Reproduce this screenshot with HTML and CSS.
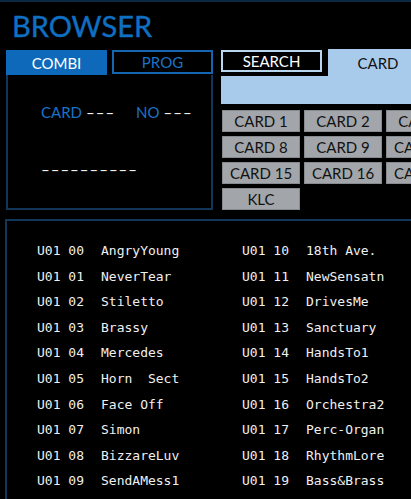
FILE: index.html
```html
<!DOCTYPE html>
<html lang="en">
<head>
    <meta charset="UTF-8">
    <meta name="viewport" content="width=device-width, initial-scale=1.0">
    <title>Browser</title>
    <link rel="stylesheet" href="styles.css">
</head>
<body>

    <h1 class="title">BROWSER</h1>

    <div class="top">
        <div class="left">
            <div class="tabs">
                <div class="tab tab-on">COMBI</div>
                <div class="tab tab-off">PROG</div>
            </div>
            <div class="info">
                <div class="info-row">
                    <span class="info-label">CARD</span>
                    <span class="dash dash-card">–––</span>
                    <span class="info-label label-no">NO</span>
                    <span class="dash dash-no">–––</span>
                </div>
                <div class="dash dash-name">––––––––––</div>
            </div>
        </div>

        <div class="right">
            <div class="right-head">
                <div class="search">SEARCH</div>
                <div class="card-tab">CARD</div>
            </div>
            <div class="card-strip"></div>
            <div class="cards">
                <div class="card-btn">CARD 1</div>
                <div class="card-btn">CARD 2</div>
                <div class="card-btn">CARD 3</div>
                <div class="card-btn">CARD 4</div>
                <div class="card-btn">CARD 5</div>
                <div class="card-btn">CARD 6</div>
                <div class="card-btn">CARD 7</div>
                <div class="card-btn">CARD 8</div>
                <div class="card-btn">CARD 9</div>
                <div class="card-btn">CARD 10</div>
                <div class="card-btn">CARD 11</div>
                <div class="card-btn">CARD 12</div>
                <div class="card-btn">CARD 13</div>
                <div class="card-btn">CARD 14</div>
                <div class="card-btn">CARD 15</div>
                <div class="card-btn">CARD 16</div>
                <div class="card-btn">CARD 17</div>
                <div class="card-btn">CARD 18</div>
                <div class="card-btn">CARD 19</div>
                <div class="card-btn">CARD 20</div>
                <div class="card-btn">CARD 21</div>
                <div class="card-btn">KLC</div>
            </div>
        </div>
    </div>

    <div class="list-panel">
        <div class="list">
            <div class="entry"><span class="num">U01 00</span><span class="name">AngryYoung</span></div>
            <div class="entry"><span class="num">U01 01</span><span class="name">NeverTear</span></div>
            <div class="entry"><span class="num">U01 02</span><span class="name">Stiletto</span></div>
            <div class="entry"><span class="num">U01 03</span><span class="name">Brassy</span></div>
            <div class="entry"><span class="num">U01 04</span><span class="name">Mercedes</span></div>
            <div class="entry"><span class="num">U01 05</span><span class="name">Horn  Sect</span></div>
            <div class="entry"><span class="num">U01 06</span><span class="name">Face Off</span></div>
            <div class="entry"><span class="num">U01 07</span><span class="name">Simon</span></div>
            <div class="entry"><span class="num">U01 08</span><span class="name">BizzareLuv</span></div>
            <div class="entry"><span class="num">U01 09</span><span class="name">SendAMess1</span></div>
            <div class="entry"><span class="num">U01 10</span><span class="name">18th Ave.</span></div>
            <div class="entry"><span class="num">U01 11</span><span class="name">NewSensatn</span></div>
            <div class="entry"><span class="num">U01 12</span><span class="name">DrivesMe</span></div>
            <div class="entry"><span class="num">U01 13</span><span class="name">Sanctuary</span></div>
            <div class="entry"><span class="num">U01 14</span><span class="name">HandsTo1</span></div>
            <div class="entry"><span class="num">U01 15</span><span class="name">HandsTo2</span></div>
            <div class="entry"><span class="num">U01 16</span><span class="name">Orchestra2</span></div>
            <div class="entry"><span class="num">U01 17</span><span class="name">Perc-Organ</span></div>
            <div class="entry"><span class="num">U01 18</span><span class="name">RhythmLore</span></div>
            <div class="entry"><span class="num">U01 19</span><span class="name">Bass&amp;Brass</span></div>
        </div>
    </div>

</body>
</html>
```

FILE: styles.css
```css
html, body {
    margin: 0;
    background: #000;
}

body {
    width: 411px;
    height: 499px;
    overflow: hidden;
    border-top: 2px solid #0c2744;
    box-sizing: border-box;
    font-family: Lato, "Open Sans", sans-serif;
}

.title {
    margin: 9px 0 8px 12px;
    font-size: 29px;
    line-height: 30px;
    font-weight: 400;
    color: #0f6fc2;
    -webkit-text-stroke: 0.4px #0f6fc2;
}

.top {
    display: flex;
    align-items: flex-start;
}

/* left block: COMBI / PROG tabs and card info */
.left {
    margin-left: 6px;
    width: 208px;
}

.tabs {
    display: flex;
    gap: 5px;
    padding-top: 1px;
}

.tab {
    width: 101px;
    box-sizing: border-box;
    display: flex;
    align-items: center;
    justify-content: center;
    font-size: 15px;
}

.tab-on {
    height: 25px;
    background: #0f69bb;
    color: #fff;
}

.tab-off {
    height: 24px;
    border: 2px solid #1565b0;
    color: #1a73c8;
}

.info {
    height: 135px;
    box-sizing: border-box;
    border: 2px solid #113659;
    border-top: none;
    padding: 28px 0 0 33px;
}

.info-row {
    display: flex;
    font-size: 15px;
    line-height: 18px;
}

.info-label {
    color: #1a73c8;
}

.dash {
    color: #f2f2f2;
    letter-spacing: 1px;
}

.dash-card {
    margin-left: 4px;
}

.label-no {
    margin-left: 21px;
}

.dash-no {
    margin-left: 4px;
}

.dash-name {
    margin-top: 39px;
    font-size: 15px;
    line-height: 18px;
}

/* right block: search button, card tab and card buttons */
.right {
    margin-left: 8px;
    width: 320px;
    flex-shrink: 0;
}

.right-head {
    display: flex;
    align-items: flex-start;
}

.search {
    margin-top: 1px;
    width: 101px;
    height: 22px;
    box-sizing: border-box;
    border: 2px solid #b8d6f0;
    color: #fff;
    font-size: 15px;
    display: flex;
    align-items: center;
    justify-content: center;
}

.card-tab {
    margin-left: 6px;
    width: 100px;
    height: 27px;
    background: #a9cbeb;
    color: #111;
    font-size: 15px;
    display: flex;
    align-items: center;
    justify-content: center;
}

.card-strip {
    height: 28px;
    background: #a9cbeb;
}

.cards {
    margin: 6px 0 0 1px;
    display: grid;
    grid-template-columns: repeat(7, 78px);
    grid-auto-rows: 22px;
    gap: 4px;
}

.card-btn {
    background: #a2a6aa;
    border: 1px solid #878b90;
    box-sizing: border-box;
    color: #111;
    font-size: 15px;
    display: flex;
    align-items: center;
    justify-content: center;
}

/* program list */
.list-panel {
    margin: 9px 0 0 5px;
    width: 430px;
    height: 300px;
    border: 2px solid #113659;
    padding: 17px 0 0 30px;
}

.list {
    display: grid;
    grid-auto-flow: column;
    grid-template-rows: repeat(10, 25.6px);
    grid-template-columns: 205px 205px;
    font-family: "DejaVu Sans Mono", monospace;
    font-size: 13px;
    line-height: 25.6px;
    color: #f0f0f0;
}

.entry {
    white-space: pre;
}

.num {
    display: inline-block;
    width: 64px;
}
```
